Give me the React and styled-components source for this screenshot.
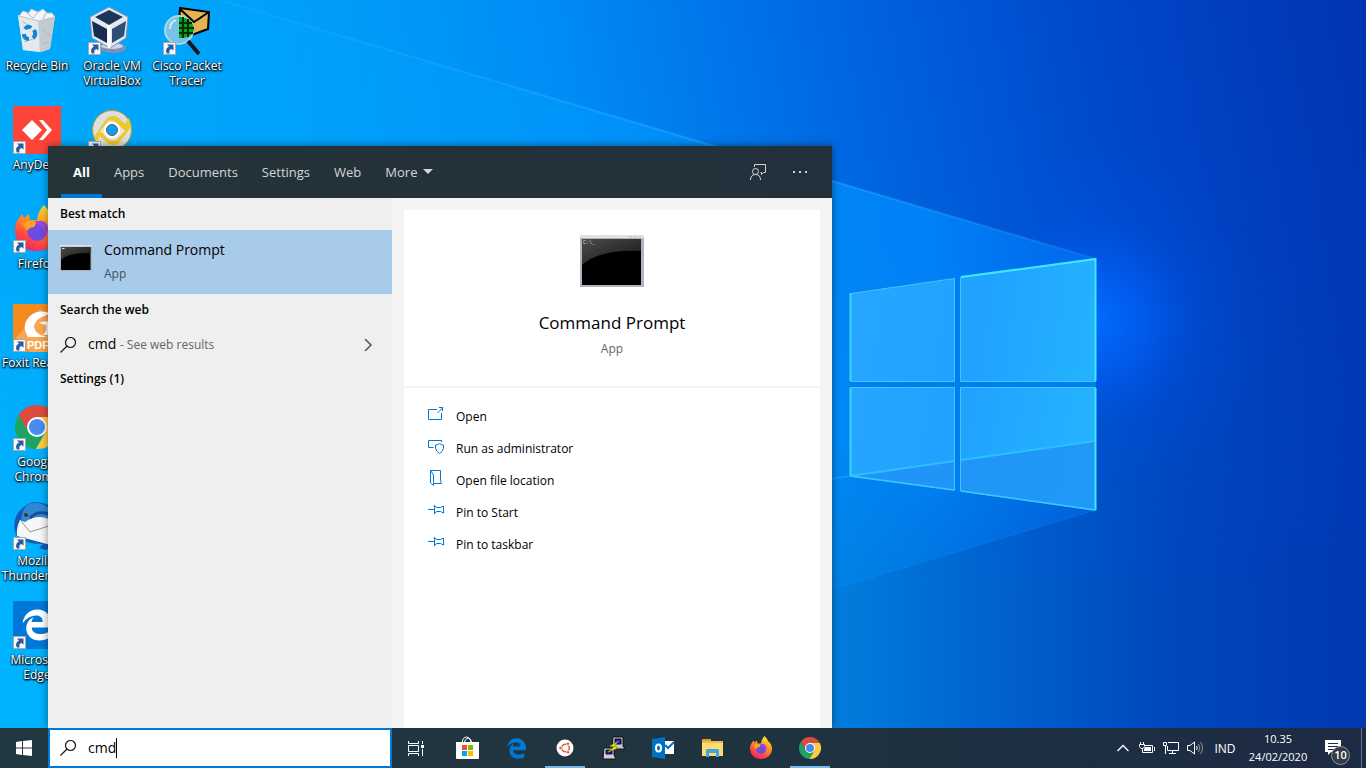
import React, { useState } from 'react';
import styled, { createGlobalStyle } from 'styled-components';
import { FaEdgeLegacy } from 'react-icons/fa';

const GlobalStyle = createGlobalStyle`
  * {
    box-sizing: border-box;
  }

  body {
    margin: 0;
    overflow: hidden;
    font-family: "Open Sans", "Noto Sans", sans-serif;
    font-size: 12px;
    color: #000;
  }

  button, input {
    font: inherit;
    color: inherit;
    border: none;
    background: none;
    padding: 0;
    margin: 0;
    outline: none;
  }
`;

const Desktop = styled.div`
  height: 100vh;
  display: flex;
  flex-direction: column;
`;

const Workspace = styled.main`
  position: relative;
  flex: 1;
  min-height: 0;
  display: flex;
  overflow: hidden;
`;

const WallpaperSvg = styled.svg`
  position: absolute;
  inset: 0;
  width: 100%;
  height: 100%;
`;

const IconColumn = styled.div`
  position: relative;
  width: 75px;
  display: flex;
  flex-direction: column;
`;

const DesktopButton = styled.button`
  width: 74px;
  height: 99px;
  padding-top: 7px;
  display: flex;
  flex-direction: column;
  align-items: center;
  gap: 3px;
`;

const IconFrame = styled.span`
  position: relative;
  width: 48px;
  height: 48px;
  flex-shrink: 0;

  svg {
    display: block;
  }
`;

const ShortcutMark = styled.svg`
  position: absolute;
  left: 0;
  bottom: 0;
`;

const DesktopLabel = styled.span`
  width: 74px;
  color: #fff;
  font-size: 12px;
  line-height: 15px;
  text-align: center;
  white-space: pre-line;
  text-shadow: 1px 1px 2px #000, 0 1px 2px #000, 0 0 2px rgba(0, 0, 0, 0.7);
`;

const SearchPanel = styled.section`
  position: absolute;
  left: 48px;
  bottom: 0;
  width: 784px;
  max-width: calc(100% - 48px);
  height: 582px;
  max-height: 100%;
  display: flex;
  flex-direction: column;
  background: #f4f4f4;
  box-shadow: 0 0 8px rgba(0, 0, 0, 0.45);
`;

const PanelHeader = styled.header`
  height: 52px;
  flex-shrink: 0;
  display: flex;
  align-items: center;
  padding: 0 11px 0 13px;
  background: linear-gradient(90deg, #243439, #22303b);
  color: #d3d6d8;
  font-size: 13px;
`;

const Tabs = styled.nav`
  display: flex;
  flex: 1;
  align-self: stretch;
`;

const Tab = styled.button`
  display: flex;
  align-items: center;
  gap: 6px;
  padding: 0 12px;
  border-top: 3px solid transparent;
  border-bottom: 4px solid ${(props) => (props.$active ? '#0078d7' : 'transparent')};
  color: ${(props) => (props.$active ? '#fff' : 'inherit')};
  font-weight: ${(props) => (props.$active ? 700 : 400)};
`;

const HeaderButton = styled.button`
  width: 42px;
  height: 42px;
  display: flex;
  align-items: center;
  justify-content: center;
`;

const PanelBody = styled.div`
  flex: 1;
  min-height: 0;
  display: flex;
`;

const Results = styled.div`
  flex: 0 0 344px;
  background: #efefef;
`;

const GroupTitle = styled.h2`
  margin: 0;
  padding: 0 12px;
  font-size: 12px;
  font-weight: 600;
  line-height: 32px;
`;

const BestMatch = styled.button`
  width: 100%;
  height: 64px;
  padding: 0 12px;
  display: flex;
  align-items: center;
  gap: 12px;
  text-align: left;
  background: #a9cbea;

  svg {
    margin-bottom: 8px;
  }
`;

const MatchText = styled.span`
  display: flex;
  flex-direction: column;
`;

const MatchName = styled.span`
  font-size: 14px;
  line-height: 24px;
`;

const Muted = styled.span`
  font-size: 12px;
  line-height: 24px;
  color: ${(props) => (props.$dark ? '#43525f' : '#666')};
`;

const WebResult = styled.button`
  width: 100%;
  height: 37px;
  padding: 0 18px 0 12px;
  display: flex;
  align-items: center;
  gap: 12px;
  text-align: left;
`;

const WebText = styled.span`
  flex: 1;
  font-size: 14px;
`;

const Details = styled.div`
  flex: 1;
  min-width: 0;
  padding: 12px 12px 0;
  display: flex;
  flex-direction: column;
  gap: 2px;
`;

const AppCard = styled.div`
  height: 176px;
  flex-shrink: 0;
  padding-top: 25px;
  display: flex;
  flex-direction: column;
  align-items: center;
  background: #fff;
`;

const AppName = styled.h1`
  margin: 22px 0 0;
  font-size: 17px;
  font-weight: 400;
  line-height: 28px;
`;

const Actions = styled.div`
  flex: 1;
  padding: 12px 0;
  display: flex;
  flex-direction: column;
  background: #fff;
`;

const ActionButton = styled.button`
  height: 32px;
  padding: 0 24px;
  display: flex;
  align-items: center;
  gap: 12px;
  text-align: left;

  svg {
    margin-bottom: 4px;
  }
`;

const Taskbar = styled.footer`
  height: 40px;
  flex-shrink: 0;
  display: flex;
  background: linear-gradient(90deg, #213840 0%, #20343f 50%, #1c2a44 100%);
  color: #fff;
`;

const TaskButton = styled.button`
  position: relative;
  width: 48px;
  height: 40px;
  display: flex;
  align-items: center;
  justify-content: center;

  &::after {
    content: "";
    position: absolute;
    left: 4px;
    right: 4px;
    bottom: 0;
    height: 2px;
    background: ${(props) => (props.$running ? '#76b9ed' : 'transparent')};
  }
`;

const SearchBox = styled.label`
  width: 344px;
  padding: 0 10px;
  display: flex;
  align-items: center;
  border: 2px solid #0078d7;
  background: #fff;
  color: #000;
  cursor: text;

  svg {
    margin-right: 12px;
  }
`;

const SearchInput = styled.input`
  field-sizing: content;
  font-size: 14px;
  line-height: 20px;
  caret-color: transparent;
`;

const Caret = styled.span`
  width: 1px;
  height: 20px;
  background: #000;
`;

const Pinned = styled.div`
  flex: 1;
  display: flex;
  gap: 1px;
  padding-left: 3px;
`;

const Tray = styled.div`
  display: flex;
  align-items: center;
  font-size: 12px;
`;

const TrayButton = styled.button`
  width: 24px;
  height: 40px;
  display: flex;
  align-items: center;
  justify-content: center;
`;

const Language = styled.button`
  width: 36px;
  font-size: 12px;
  text-align: center;
`;

const Clock = styled.button`
  width: 70px;
  font-size: 11px;
  line-height: 18px;
  text-align: center;
`;

const Notifications = styled.button`
  position: relative;
  width: 48px;
  height: 40px;
  display: flex;
  align-items: center;
  padding-left: 12px;
`;

const Badge = styled.span`
  position: absolute;
  left: 18px;
  bottom: 3px;
  width: 19px;
  height: 19px;
  border: 1px solid #8b929a;
  border-radius: 50%;
  background: #343b43;
  font-size: 11px;
  font-weight: 600;
  line-height: 16px;
  text-align: center;
`;

const ShowDesktop = styled.button`
  width: 5px;
  align-self: stretch;
  border-left: 1px solid #6d7787;
`;

const Wallpaper = () => (
  <WallpaperSvg viewBox="0 0 1366 728" preserveAspectRatio="none" aria-hidden="true">
    <defs>
      <linearGradient id="sky" x1="0" y1="0.1" x2="1" y2="0">
        <stop offset="0" stopColor="#00a9fb" />
        <stop offset="0.2" stopColor="#00a1fa" />
        <stop offset="0.4" stopColor="#008df6" />
        <stop offset="0.6" stopColor="#0068e2" />
        <stop offset="0.8" stopColor="#0048ca" />
        <stop offset="1" stopColor="#0034b2" />
      </linearGradient>
      <linearGradient id="floor" x1="0" y1="0" x2="1" y2="0">
        <stop offset="0" stopColor="#00b4ff" />
        <stop offset="0.3" stopColor="#00a0f4" />
        <stop offset="0.6" stopColor="#0080de" />
        <stop offset="0.72" stopColor="#0064d0" />
        <stop offset="0.85" stopColor="#0048be" />
        <stop offset="1" stopColor="#0038b2" />
      </linearGradient>
      <linearGradient id="fade" x1="0" y1="0" x2="0" y2="1">
        <stop offset="0.3" stopColor="#fff" stopOpacity="0" />
        <stop offset="0.8" stopColor="#fff" />
      </linearGradient>
      <mask id="lower">
        <rect width="1366" height="728" fill="url(#fade)" />
      </mask>
      <linearGradient id="beam" x1="0" y1="0" x2="1" y2="0">
        <stop offset="0" stopColor="#00b0ff" stopOpacity="0.1" />
        <stop offset="0.7" stopColor="#0098ff" stopOpacity="0.6" />
        <stop offset="0.85" stopColor="#008cff" stopOpacity="0.75" />
        <stop offset="1" stopColor="#0076f6" stopOpacity="0.6" />
      </linearGradient>
      <linearGradient id="beamDepth" x1="0" y1="0" x2="0" y2="1">
        <stop offset="0.6" stopColor="#fff" />
        <stop offset="0.82" stopColor="#fff" stopOpacity="0.3" />
      </linearGradient>
      <mask id="beamMask">
        <rect width="1366" height="728" fill="url(#beamDepth)" />
      </mask>
      <radialGradient id="glow" gradientUnits="userSpaceOnUse" cx="1095" cy="320" r="170">
        <stop offset="0" stopColor="#006cff" />
        <stop offset="0.3" stopColor="#0060f8" stopOpacity="0.7" />
        <stop offset="0.6" stopColor="#0054e6" stopOpacity="0.25" />
        <stop offset="1" stopColor="#0050e0" stopOpacity="0" />
      </radialGradient>
      <linearGradient id="ray" gradientUnits="userSpaceOnUse" x1="220" y1="0" x2="1096" y2="259">
        <stop offset="0" stopColor="#35b6ff" stopOpacity="0.2" />
        <stop offset="0.7" stopColor="#35b6ff" stopOpacity="0.45" />
        <stop offset="1" stopColor="#35a6ff" stopOpacity="0.2" />
      </linearGradient>
      <linearGradient id="pane" gradientUnits="userSpaceOnUse" x1="850" y1="300" x2="1096" y2="340">
        <stop offset="0" stopColor="#26a6ff" />
        <stop offset="0.5" stopColor="#20a2ff" />
        <stop offset="1" stopColor="#24b2ff" />
      </linearGradient>
    </defs>
    <rect width="1366" height="728" fill="url(#sky)" />
    <rect width="1366" height="728" fill="url(#floor)" mask="url(#lower)" />
    <ellipse cx="1095" cy="320" rx="170" ry="170" fill="url(#glow)" />
    <path d="M220 0L1096 259V510L830 590L0 728V0Z" fill="url(#beam)" mask="url(#beamMask)" />
    <path d="M220 0L1096 259" stroke="url(#ray)" strokeWidth="2" />
    <path d="M850 476L830 479" stroke="#22b4ff" strokeWidth="2" strokeOpacity="0.4" />
    <path d="M1096 510L830 590" stroke="#22a4ff" strokeOpacity="0.2" />
    <path d="M849 292L1096 258V511L849 476Z" fill="#0080ee" />
    <g fill="url(#pane)" stroke="#45c4ff" strokeWidth="1">
      <path d="M850.5 293.500L954.500 278.500V381.500H850.500Z" />
      <path d="M960.500 277.500L1095.500 259.500V381.500H960.500Z" />
      <path d="M850.500 387.500H954.500V490L850.500 476Z" />
      <path d="M960.500 387.500H1095.500V510L960.500 491Z" />
    </g>
    <path d="M850 476L954 461V490ZM961 460L1095 441V510L961 491Z" fill="#2090f4" fillOpacity="0.75" />
    <path d="M850 476L954 461M961 460L1095 441" stroke="#2cc0ff" strokeWidth="2" />
    <path d="M850.500 293V381M850.500 388V476" fill="none" stroke="#3cd8ff" strokeWidth="2" />
    <path d="M961 277L1095.500 259V381M1095.500 388V510" fill="none" stroke="#42e6ff" strokeWidth="2" />
    <path d="M850 476L954 490M961 491L1095 510" stroke="#3cc8ff" strokeWidth="1.500" />
  </WallpaperSvg>
);

const Shortcut = () => (
  <ShortcutMark width="13" height="13" viewBox="0 0 13 13">
    <path d="M.5.500H12.500V12.500H.500Z" fill="#f8f8f8" stroke="#a5a8ac" />
    <path d="M4 2.500H10.500V8.500L8.500 7C6.500 7.500 6 9 6.500 11.500H4C2 8.500 3.500 6 6 4.500Z" fill="#2c5aa0" />
  </ShortcutMark>
);

const RecycleBinIcon = () => (
  <svg width="48" height="48" viewBox="0 0 48 48">
    <path d="M5 8L42 9 37 42 28 45 10 43Z" fill="#d3dade" />
    <path d="M5 8L25 13 27 45 10 43Z" fill="#e4e9ec" />
    <path d="M25 13L42 9 37 42 27 45Z" fill="#c2cbd1" />
    <path d="M6 9L10 4 16 6 18 2 25 5 30 2 34 6 39 6 42 10 26 14Z" fill="#f4f5f6" stroke="#b8c1c8" />
    <path d="M14 6L20 11 25 5M30 12L33 6M11 35L23 31M30 22L38 30M29 37L36 35M9 14L15 18" stroke="#aeb9c1" fill="none" />
    <g fill="none" stroke="#1383d8" strokeWidth="4">
      <path d="M12 22Q15 18 18 21" />
      <path d="M21 23Q24 28 20 31" />
      <path d="M16 32Q11 32 11 27" />
    </g>
  </svg>
);

const VirtualBoxIcon = () => (
  <svg width="48" height="48" viewBox="0 0 48 48">
    <ellipse cx="25" cy="41" rx="13" ry="5" fill="#7f8fb8" />
    <ellipse cx="24" cy="39" rx="11" ry="3" fill="#cad4ea" />
    <path d="M21 0L40 10 38 31 22 41 4 31 2 10Z" fill="#e3e9f3" stroke="#8494b5" />
    <path d="M21 3L35 10 21 18 7 10Z" fill="#1f3558" />
    <path d="M4 14L19 22V36L6 29Z" fill="#172c4e" />
    <path d="M38 14L24 22V36L36 29Z" fill="#304c78" />
    <path d="M21 18V41" stroke="#fff" strokeWidth="3" />
  </svg>
);

const PacketTracerIcon = () => (
  <svg width="48" height="48" viewBox="0 0 48 48">
    <path d="M17 1L46 5 45 22 26 29 16 18Z" fill="#e5b352" stroke="#000" strokeWidth="2" />
    <path d="M17 2L31 15 46 5" fill="none" stroke="#000" strokeWidth="2" />
    <circle cx="16" cy="23" r="14" fill="#78c2e8" stroke="#a8d6ec" strokeWidth="2" />
    <path d="M17 10Q30 11 31 23 29 31 19 31H16V10Z" fill="#06a514" />
    <path d="M20 10V31M25 12V30M16 16H29M16 21H31M16 26H30" stroke="#052c08" strokeWidth="2" />
    <path d="M25 34L36 47" stroke="#181818" strokeWidth="4" />
    <path d="M7 22Q7 15 13 13" fill="none" stroke="#c8e9f8" strokeWidth="2" />
  </svg>
);

const AnyDeskIcon = () => (
  <svg width="48" height="48" viewBox="0 0 48 48">
    <rect width="48" height="48" fill="#fd4438" />
    <path d="M9 24L19 14 29 24 19 34ZM26 14H30L39 24 30 34H26L34 24Z" fill="#fff" />
  </svg>
);

const DiscIcon = () => (
  <svg width="48" height="48" viewBox="0 0 48 48">
    <circle cx="24" cy="24" r="19.500" fill="#dededc" stroke="#b79c29" />
    <path d="M6 31L19 12Q26 7 33 14L37 18 41 12Q43 17 43 21L30 38Q24 41 17 35L12 30 8 36Z" fill="#eec72b" />
    <path d="M11 27L20 15Q26 13 31 19L37 25 28 34Q22 36 17 30L14 26Z" fill="#e6e6e2" />
    <circle cx="24" cy="24" r="8" fill="#fff" />
    <circle cx="24" cy="24" r="5.500" fill="#0aa0f0" stroke="#655f50" />
  </svg>
);

const FirefoxIcon = ({ size }) => (
  <svg width={size} height={size} viewBox="0 0 48 48">
    <defs>
      <linearGradient id="flame" x1="0.8" y1="0" x2="0.3" y2="1">
        <stop offset="0" stopColor="#fff044" />
        <stop offset="0.4" stopColor="#ff9a1f" />
        <stop offset="0.75" stopColor="#ff4a42" />
        <stop offset="1" stopColor="#ed2268" />
      </linearGradient>
    </defs>
    <path d="M31 0Q36 5 38 10Q45 15 46 24Q46 35 39 41Q32 46 24 46Q14 46 8 40Q2 34 2 26Q1 19 6 13L9 9 11 13 16 9 17 15 24 15Q25 6 31 0Z" fill="url(#flame)" />
    <circle cx="24" cy="26" r="10" fill="#6f4be0" />
    <path d="M9 18Q16 14 24 17L21 22Q17 22 14 26Z" fill="#ff9f23" />
    <path d="M22 17Q33 13 35 23Q35 29 31 33Q33 24 27 21Z" fill="#9a49e2" />
  </svg>
);

const FoxitIcon = () => (
  <svg width="48" height="48" viewBox="0 0 48 48">
    <rect width="48" height="48" fill="#f58a1f" />
    <path d="M3 34L27 5 48 26V48H17Z" fill="#f9a64f" />
    <path d="M39 10Q25 4 16 13Q8 22 15 33H37Q23 32 21 23Q22 13 39 10ZM26 19Q35 15 41 20V31H30Q34 27 33 21Z" fill="#fff" />
    <text x="14" y="45" fontFamily="Liberation Sans, sans-serif" fontSize="11" fontWeight="700" fill="#fff">PDF</text>
  </svg>
);

const ChromeIcon = ({ size }) => (
  <svg width={size} height={size} viewBox="-24 -24 48 48">
    <path d="M-8.660 5L-18.460 -11.970A22 22 0 0 1 19.600 -10L0 -10 0 0Z" fill="#db4b3e" />
    <path d="M-8.660 5L-18.460 -11.970A22 22 0 0 0 -1.140 21.970L8.660 5 0 0Z" fill="#1da362" />
    <path d="M0 -10L19.600 -10A22 22 0 0 1 -1.140 21.970L8.660 5 0 0Z" fill="#fdcc45" />
    <circle r="10" fill="#fff" />
    <circle r="8" fill="#4a8af4" />
  </svg>
);

const ThunderbirdIcon = () => (
  <svg width="48" height="48" viewBox="0 0 48 48">
    <path d="M20 0Q47 0 47 24Q47 42 33 48L26 46 30 42Q10 42 3 33Q-3 15 12 4Q16 1 20 0Z" fill="#1659b0" />
    <path d="M13 4Q20 -2 31 3Q43 8 46 20Q35 14 24 17Q18 16 12 20L8 17Q9 9 13 4Z" fill="#2f88d4" />
    <path d="M7 18L12 20Q24 12 36 17L46 20V39Q37 44 30 41L4 34Q3 26 7 18Z" fill="#f7f7f8" />
    <path d="M8 19L17 30 45 21" fill="none" stroke="#8e959b" />
    <path d="M17 16Q24 8 36 12" fill="none" stroke="#1a4fa0" strokeWidth="3" />
    <circle cx="13" cy="13" r="2" fill="#473421" />
  </svg>
);

const EdgeTile = styled.span`
  display: flex;
  align-items: center;
  justify-content: center;
  width: 48px;
  height: 48px;
  background: #0078d7;
  color: #fff;
`;

const CommandIcon = ({ width, height, showText }) => (
  <svg width={width} height={height} viewBox="0 0 64 52">
    <defs>
      <linearGradient id="shine" x1="0" y1="0" x2="1" y2="1">
        <stop offset="0" stopColor="#4b4b4b" />
        <stop offset="1" stopColor="#161616" />
      </linearGradient>
    </defs>
    <path d="M0 0H64V52H0Z" fill="#aeb5bf" />
    <path d="M0 0H64V3H0Z" fill="#dfe3e6" />
    <path d="M2 4H61V50H2Z" fill="#000" />
    <path d="M2 4H61V16Q20 14 2 30Z" fill="url(#shine)" />
    <path d="M49 2H52M54 2H57M59 2H61" stroke="#bbb" />
    {showText ? (
      <text x="3" y="9" fontFamily="Liberation Mono, monospace" fontSize="5" fill="#ddd">C:\_</text>
    ) : (
      <path d="M4 7H9" stroke="#ddd" strokeWidth="2" />
    )}
  </svg>
);

const SearchIcon = () => (
  <svg width="16" height="16" viewBox="0 0 16 16" fill="none" stroke="#1a1a1a" strokeWidth="1.200">
    <circle cx="10.500" cy="5.500" r="5" />
    <path d="M7 9L.500 15.500" />
  </svg>
);

const ActionSvg = ({ children }) => (
  <svg width="16" height="16" viewBox="0 0 16 16" fill="none" stroke="#0078d7">{children}</svg>
);

const PinIcon = () => (
  <ActionSvg>
    <path d="M0 7.500H6M6.500 3V12M6.500 4L9 5.500H12.500L15.500 4V11L12.500 9.500H9L6.500 11" />
  </ActionSvg>
);

const StoreIcon = () => (
  <svg width="24" height="24" viewBox="0 0 24 24">
    <path d="M7.500 7V4Q9 1 11.500 1Q15 1 16 7M9 7Q10 3 13 2Q16 2 17 7" fill="none" stroke="#fff" strokeWidth="1" />
    <path d="M1 6H24V22Q24 23 23 23H2Q1 23 1 22Z" fill="#fff" />
    <path d="M7 9H12V14H7Z" fill="#f25022" />
    <path d="M13 9H18V14H13Z" fill="#7fba00" />
    <path d="M7 15H12V20H7Z" fill="#00a4ef" />
    <path d="M13 15H18V20H13Z" fill="#ffb900" />
  </svg>
);

const UbuntuIcon = () => (
  <svg width="18" height="18" viewBox="0 0 18 18">
    <circle cx="9" cy="9" r="8.500" fill="#fff" />
    <circle cx="9.500" cy="9" r="3.800" fill="none" stroke="#dd5a34" strokeWidth="1.500" />
    <g fill="#dd5a34" stroke="#fff" strokeWidth="0.800">
      <circle cx="4.500" cy="9" r="1.700" />
      <circle cx="12" cy="4.700" r="1.700" />
      <circle cx="12" cy="13.300" r="1.700" />
    </g>
  </svg>
);

const PuttyIcon = () => (
  <svg width="24" height="24" viewBox="0 0 24 24" stroke="#111" strokeWidth="1">
    <path d="M11 1H21V10L23 13H10Z" fill="#c9c9c9" />
    <path d="M13 3H19V8H13Z" fill="#1616d8" />
    <path d="M2 12H12V19L14 23H1Z" fill="#d2d2d2" />
    <path d="M4 14H10V18H4Z" fill="#1616d8" />
    <path d="M17 5L8 10 12 11 6 16 16 12 12 10Z" fill="#f8f52a" stroke="#97920d" />
  </svg>
);

const OutlookIcon = () => (
  <svg width="24" height="24" viewBox="0 0 24 24">
    <path d="M12 5H23V18H12Z" fill="#fff" />
    <path d="M14 9L17 12 23 6" fill="none" stroke="#0072c6" strokeWidth="2" />
    <path d="M1 3L14 1V23L1 21Z" fill="#0072c6" />
    <ellipse cx="7.500" cy="12" rx="2.500" ry="3.500" fill="none" stroke="#fff" strokeWidth="2" />
  </svg>
);

const FolderIcon = () => (
  <svg width="24" height="24" viewBox="0 0 24 24">
    <path d="M2 3H11V5H23V20H2Z" fill="#f3bd45" />
    <path d="M2 7H23V20H2Z" fill="#ffdc73" />
    <path d="M2 3H11V5H2Z" fill="#df9b20" />
    <path d="M6 21V14Q6 13 7 13H18Q19 13 19 14V21H16V17H9V21Z" fill="#42a4df" />
  </svg>
);

const WindowsIcon = () => (
  <svg width="16" height="16" viewBox="0 0 16 16" fill="#fff">
    <path d="M0 2L6 1V7.500H0ZM7 1L16 0V7.500H7ZM0 8.500H6V15L0 14ZM7 8.500H16V16L7 15Z" />
  </svg>
);

const TaskViewIcon = () => (
  <svg width="16" height="16" viewBox="0 0 16 16" fill="none" stroke="#fff">
    <path d="M1 5.500H10.500V11.500H.500V5.500ZM.500 1V3.500H10.500V1M.500 16V13.500H10.500V16M14.500 1V4M14.500 9V16" />
    <path d="M13 5H16V8H13Z" fill="#fff" stroke="none" />
  </svg>
);

const firstColumn = [
  { label: 'Recycle Bin', icon: <RecycleBinIcon /> },
  { label: 'AnyDesk', icon: <AnyDeskIcon />, shortcut: true },
  { label: 'Firefox', icon: <FirefoxIcon size={48} />, shortcut: true },
  { label: 'Foxit Reader', icon: <FoxitIcon />, shortcut: true },
  { label: 'Google\nChrome', icon: <ChromeIcon size={48} />, shortcut: true },
  { label: 'Mozilla\nThunderbird', icon: <ThunderbirdIcon />, shortcut: true },
  { label: 'Microsoft\nEdge', icon: <EdgeTile><FaEdgeLegacy size={32} /></EdgeTile>, shortcut: true },
];

const secondColumn = [
  { label: 'Oracle VM\nVirtualBox', icon: <VirtualBoxIcon />, shortcut: true },
  { label: '', icon: <DiscIcon />, shortcut: true },
];

const thirdColumn = [
  { label: 'Cisco Packet\nTracer', icon: <PacketTracerIcon />, shortcut: true },
];

const tabs = ['All', 'Apps', 'Documents', 'Settings', 'Web'];

const actions = [
  {
    label: 'Open',
    icon: <ActionSvg><path d="M9 3.500H.500V13.500H13.500V7M9.500 7L15 1.500M11 1.500H14.500V5" /></ActionSvg>,
  },
  {
    label: 'Run as administrator',
    icon: (
      <ActionSvg>
        <path d="M5.500 9.500H.500V2.500H13.500V4M11.500 5.500Q13 7 15.500 7V10Q15 13.500 11.500 15.500Q8 13.500 7.500 10V7Q10 7 11.500 5.500Z" />
      </ActionSvg>
    ),
  },
  {
    label: 'Open file location',
    icon: <ActionSvg><path d="M2.500.500H12.500V10L13.500 13.500H6M2.500.500V13L5.500 15.500V5L2.500.500" /></ActionSvg>,
  },
  { label: 'Pin to Start', icon: <PinIcon /> },
  { label: 'Pin to taskbar', icon: <PinIcon /> },
];

const pinned = [
  { name: 'Microsoft Store', icon: <StoreIcon /> },
  { name: 'Microsoft Edge', icon: <FaEdgeLegacy size={21} color="#0078d7" /> },
  { name: 'Ubuntu', icon: <UbuntuIcon />, running: true },
  { name: 'PuTTY', icon: <PuttyIcon /> },
  { name: 'Outlook', icon: <OutlookIcon /> },
  { name: 'File Explorer', icon: <FolderIcon /> },
  { name: 'Firefox', icon: <FirefoxIcon size={24} /> },
  { name: 'Google Chrome', icon: <ChromeIcon size={24} />, running: true },
];

const DesktopIcons = ({ items }) => (
  <IconColumn>
    {items.map((item) => (
      <DesktopButton key={item.label} aria-label={item.label || 'Disc'}>
        <IconFrame>
          {item.icon}
          {item.shortcut && <Shortcut />}
        </IconFrame>
        <DesktopLabel>{item.label}</DesktopLabel>
      </DesktopButton>
    ))}
  </IconColumn>
);

const App = () => {
  const [query, setQuery] = useState('cmd');
  const [activeTab, setActiveTab] = useState('All');

  return (
    <Desktop>
      <GlobalStyle />
      <Workspace>
        <Wallpaper />
        <DesktopIcons items={firstColumn} />
        <DesktopIcons items={secondColumn} />
        <DesktopIcons items={thirdColumn} />

        <SearchPanel>
          <PanelHeader>
            <Tabs>
              {tabs.map((tab) => (
                <Tab key={tab} $active={tab === activeTab} onClick={() => setActiveTab(tab)}>{tab}</Tab>
              ))}
              <Tab>
                More
                <svg width="10" height="6" viewBox="0 0 10 6" fill="currentColor"><path d="M0 0H10L5 5Z" /></svg>
              </Tab>
            </Tabs>
            <HeaderButton aria-label="Feedback">
              <svg width="16" height="16" viewBox="0 0 16 16" fill="none" stroke="currentColor">
                <circle cx="5.500" cy="7.500" r="3" />
                <path d="M.500 16Q.500 10.500 5.500 10.500T10.500 16M4.500 3V.500H15.500V8.500H13.500L11.500 10.500V8.500H10.500" />
              </svg>
            </HeaderButton>
            <HeaderButton aria-label="More options">
              <svg width="14" height="2" viewBox="0 0 14 2" fill="currentColor">
                <path d="M0 0H2V2H0ZM6 0H8V2H6ZM12 0H14V2H12Z" />
              </svg>
            </HeaderButton>
          </PanelHeader>

          <PanelBody>
            <Results>
              <GroupTitle>Best match</GroupTitle>
              <BestMatch>
                <CommandIcon width={32} height={26} />
                <MatchText>
                  <MatchName>Command Prompt</MatchName>
                  <Muted $dark>App</Muted>
                </MatchText>
              </BestMatch>
              <GroupTitle>Search the web</GroupTitle>
              <WebResult>
                <SearchIcon />
                <WebText>{query} <Muted>- See web results</Muted></WebText>
                <svg width="12" height="12" viewBox="0 0 12 12" fill="none" stroke="#555" strokeWidth="1.500">
                  <path d="M3 0L9 6 3 12" />
                </svg>
              </WebResult>
              <GroupTitle>Settings (1)</GroupTitle>
            </Results>

            <Details>
              <AppCard>
                <CommandIcon width={64} height={52} showText />
                <AppName>Command Prompt</AppName>
                <Muted>App</Muted>
              </AppCard>
              <Actions>
                {actions.map((action) => (
                  <ActionButton key={action.label}>
                    {action.icon}
                    {action.label}
                  </ActionButton>
                ))}
              </Actions>
            </Details>
          </PanelBody>
        </SearchPanel>
      </Workspace>

      <Taskbar>
        <TaskButton aria-label="Start"><WindowsIcon /></TaskButton>
        <SearchBox>
          <SearchIcon />
          <SearchInput
            type="text"
            aria-label="Search"
            value={query}
            onChange={(event) => setQuery(event.target.value)}
          />
          <Caret />
        </SearchBox>
        <TaskButton aria-label="Task View"><TaskViewIcon /></TaskButton>
        <Pinned>
          {pinned.map((app) => (
            <TaskButton key={app.name} aria-label={app.name} $running={app.running}>{app.icon}</TaskButton>
          ))}
        </Pinned>
        <Tray>
          <TrayButton aria-label="Show hidden icons">
            <svg width="12" height="8" viewBox="0 0 12 8" fill="none" stroke="#fff" strokeWidth="1.300"><path d="M.500 7L6 1.500 11.500 7" /></svg>
          </TrayButton>
          <TrayButton aria-label="Battery">
            <svg width="16" height="16" viewBox="0 0 16 16" fill="none" stroke="#fff">
              <path d="M5 5.500H13.500V12.500H3.500V9M15.500 7V11M1.500 2V4M4.500 2V4M.500 4.500H5.500V6.500L4 8.500H2L.500 6.500ZM3.500 8V12" />
              <path d="M6 7H12V11H5V9Z" fill="#fff" stroke="none" />
            </svg>
          </TrayButton>
          <TrayButton aria-label="Network">
            <svg width="16" height="16" viewBox="0 0 16 16" fill="none" stroke="#fff">
              <path d="M5 2.500H15.500V10.500H4.500V6M9.500 10.500V13.500M6 13.500H13M.500 2.500H3.500V5.500H.500ZM2.500 6V14" />
            </svg>
          </TrayButton>
          <TrayButton aria-label="Volume">
            <svg width="17" height="16" viewBox="0 0 17 16" fill="none" stroke="#fff">
              <path d="M.500 5.500H3L7.500 2V14L3 10.500H.500ZM9.500 6Q11 8 9.500 10" />
              <path d="M11.500 4Q14 8 11.500 12M13.500 2Q17.500 8 13.500 14" stroke="#8791a0" />
            </svg>
          </TrayButton>
          <Language>IND</Language>
          <Clock>10.35<br />24/02/2020</Clock>
          <Notifications aria-label="10 notifications">
            <svg width="16" height="16" viewBox="0 0 16 16">
              <path d="M0 0H16V12H6L3 15V12H0Z" fill="#fff" />
              <path d="M3 3.500H13M3 6.500H13M3 9.500H9" stroke="#1c2a44" />
            </svg>
            <Badge>10</Badge>
          </Notifications>
          <ShowDesktop aria-label="Show desktop" />
        </Tray>
      </Taskbar>
    </Desktop>
  );
};

export default App;
